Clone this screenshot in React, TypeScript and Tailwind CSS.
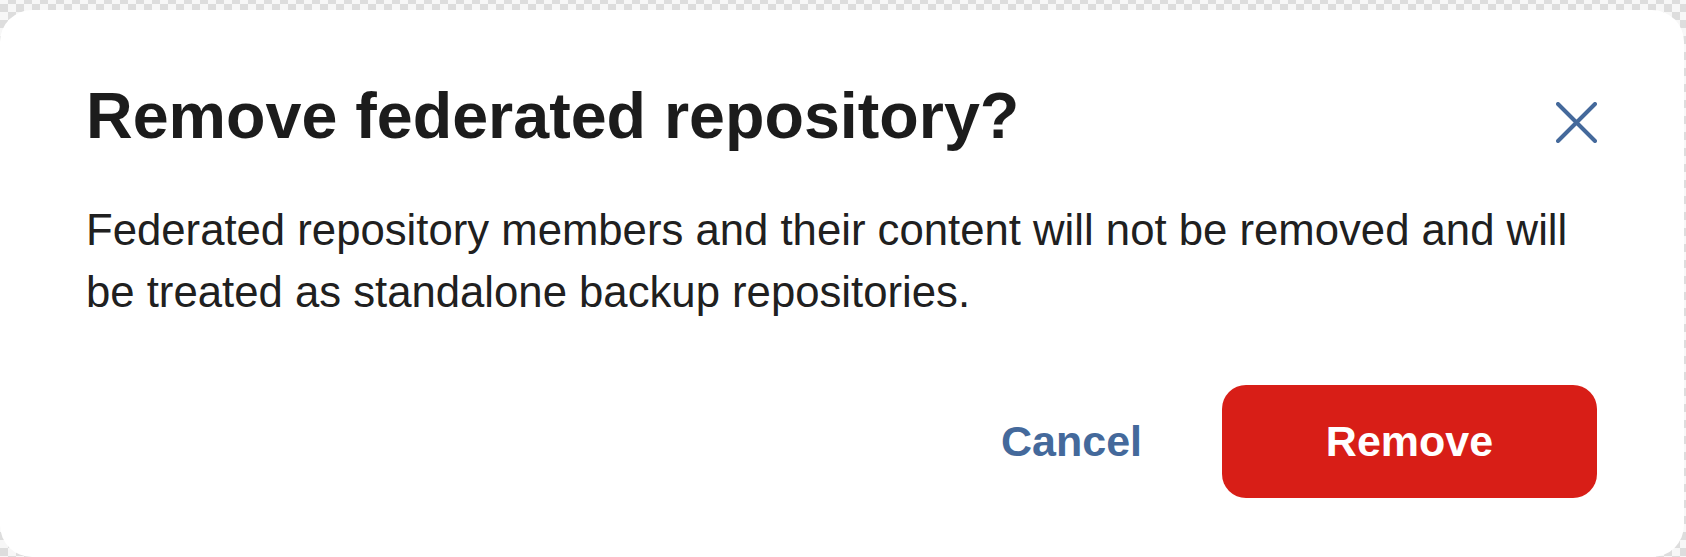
import React from 'react'

export default function App() {
  return (
    <div className="h-[557px] w-full overflow-hidden bg-[repeating-conic-gradient(#dddddd_0_25%,#f7f7f7_0_50%)] bg-[length:16px_16px] bg-[position:0_-4px] pt-[10px] pr-[2px] font-['Liberation_Sans',Arial,sans-serif]">
      <div className="h-[547px] rounded-[32px] bg-white pl-[86px] pr-[87px] pt-[70px] pb-[59px]">
        {/* Header */}
        <div className="flex items-start justify-between">
          <h1 className="text-[64.6px] font-bold leading-[72px] text-[#1c1c1c]">
            Remove federated repository?
          </h1>
          <button className="mt-[22px] text-[#44699b]" aria-label="Close">
            <svg width="41" height="41" viewBox="0 0 41 41" fill="none">
              <path
                d="M2 2L39 39M39 2L2 39"
                stroke="currentColor"
                strokeWidth="4"
                strokeLinecap="round"
              />
            </svg>
          </button>
        </div>

        {/* Body */}
        <p className="mt-[47px] text-[43.7px] leading-[62px] text-[#202020]">
          Federated repository members and their content will not be removed and will
          be treated as standalone backup repositories.
        </p>

        {/* Actions */}
        <div className="mt-[62px] flex items-center justify-end gap-[80px]">
          <button className="text-[43px] font-bold text-[#44699b]">Cancel</button>
          <button className="flex h-[113px] w-[375px] items-center justify-center rounded-[24px] bg-[#d81e17] text-[43px] font-bold text-white">
            Remove
          </button>
        </div>
      </div>
    </div>
  )
}
